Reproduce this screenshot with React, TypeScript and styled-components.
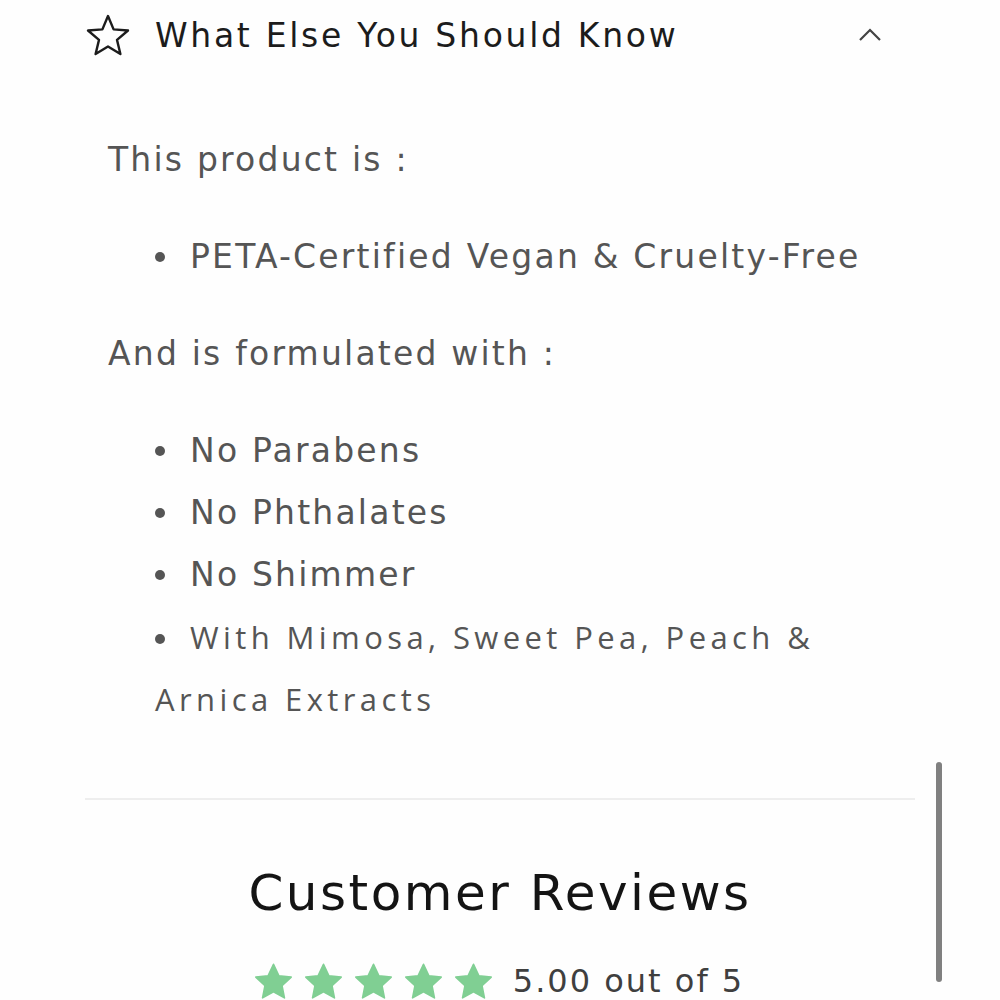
import React from 'react';
import styled, { createGlobalStyle } from 'styled-components';

const GlobalStyle = createGlobalStyle`
  html, body {
    margin: 0;
    padding: 0;
    background: #fefefe;
  }
  body {
    font-family: 'DejaVu Sans', 'Open Sans', sans-serif;
    overflow: hidden;
  }
`;

const Page = styled.div`
  position: relative;
  width: 1000px;
  height: 1000px;
  overflow: hidden;
  padding: 0 85px;
  box-sizing: border-box;
`;

const Header = styled.div`
  display: flex;
  align-items: center;
  height: 72px;
  margin-top: -1px;
`;

const Title = styled.h2`
  margin: 0 0 0 24px;
  font-size: 33px;
  font-weight: 400;
  letter-spacing: 2.7px;
  color: #1c1c1c;
  white-space: nowrap;
`;

const Chevron = styled.svg`
  margin-left: auto;
  margin-right: 33px;
  width: 24px;
  height: 14px;
  flex-shrink: 0;
`;

const Body = styled.div`
  padding: 0 0 0 23px;
  color: #555;
  font-size: 33px;
  letter-spacing: 2.2px;
`;

const Lead = styled.p<{ $top: number }>`
  margin: 0;
  line-height: 62px;
  padding-top: ${({ $top }) => $top}px;
`;

const List = styled.ul`
  list-style: none;
  margin: 0;
  padding: 35px 0 0 47px;
`;

const Item = styled.li<{ $alt?: boolean }>`
  line-height: 62px;
  font-family: ${({ $alt }) => ($alt ? "'Open Sans', sans-serif" : 'inherit')};
  font-size: ${({ $alt }) => ($alt ? '31px' : 'inherit')};
  letter-spacing: ${({ $alt }) => ($alt ? '4.4px' : 'inherit')};

  &::before {
    content: '';
    display: inline-block;
    width: 10px;
    height: 10px;
    border-radius: 50%;
    background: #555;
    vertical-align: middle;
    margin: -4px 25px 0 0;
  }
`;

const Divider = styled.hr`
  margin: 68px 0 0;
  border: 0;
  border-top: 2px solid #eeeeee;
`;

const ReviewsTitle = styled.h2`
  margin: 64px 0 0;
  text-align: center;
  font-size: 50px;
  font-weight: 400;
  letter-spacing: 2.5px;
  color: #141414;
`;

const RatingRow = styled.div`
  display: flex;
  justify-content: center;
  align-items: center;
  gap: 20px;
  margin-top: 40px;
  margin-left: -2px;
`;

const Stars = styled.div`
  display: flex;
  gap: 11px;
`;

const Score = styled.span`
  font-size: 32px;
  letter-spacing: 2px;
  color: #3f3f3f;
`;

const ScrollThumb = styled.div`
  position: absolute;
  left: 936px;
  top: 762px;
  width: 6px;
  height: 220px;
  border-radius: 3px;
  background: #808080;
`;

const GreenStar = () => (
  <svg width="39" height="37" viewBox="0 0 24 23">
    <path
      d="M12 0.8l3.3 7.1 7.7.9-5.7 5.3 1.5 7.6L12 17.9l-6.8 3.8 1.5-7.6L1 8.8l7.7-.9z"
      fill="#80cf93"
      stroke="#80cf93"
      strokeWidth="1"
      strokeLinejoin="round"
    />
  </svg>
);

export default function App() {
  const formulated = ['No Parabens', 'No Phthalates', 'No Shimmer'];
  return (
    <>
      <GlobalStyle />
      <Page>
        <Header>
          <svg width="46" height="44" viewBox="0 0 46 44">
            <path
              d="M23 3l5.6 13.4 14.4 1.1-11 9.4 3.4 14.1L23 33.4 10.6 41l3.4-14.1-11-9.4 14.4-1.1z"
              fill="none"
              stroke="#1c1c1c"
              strokeWidth="2.4"
              strokeLinejoin="round"
            />
          </svg>
          <Title>What Else You Should Know</Title>
          <Chevron viewBox="0 0 24 14">
            <path d="M2 12l10-10 10 10" fill="none" stroke="#444" strokeWidth="2.2" />
          </Chevron>
        </Header>
        <Body>
          <Lead $top={58}>This product is :</Lead>
          <List>
            <Item>PETA-Certified Vegan &amp; Cruelty-Free</Item>
          </List>
          <Lead $top={35}>And is formulated with :</Lead>
          <List>
            {formulated.map((t) => (
              <Item key={t}>{t}</Item>
            ))}
            <Item $alt>With Mimosa, Sweet Pea, Peach &amp; Arnica Extracts</Item>
          </List>
        </Body>
        <Divider />
        <ReviewsTitle>Customer Reviews</ReviewsTitle>
        <RatingRow>
          <Stars>
            {[0, 1, 2, 3, 4].map((i) => (
              <GreenStar key={i} />
            ))}
          </Stars>
          <Score>5.00 out of 5</Score>
        </RatingRow>
        <ScrollThumb />
      </Page>
    </>
  );
}
